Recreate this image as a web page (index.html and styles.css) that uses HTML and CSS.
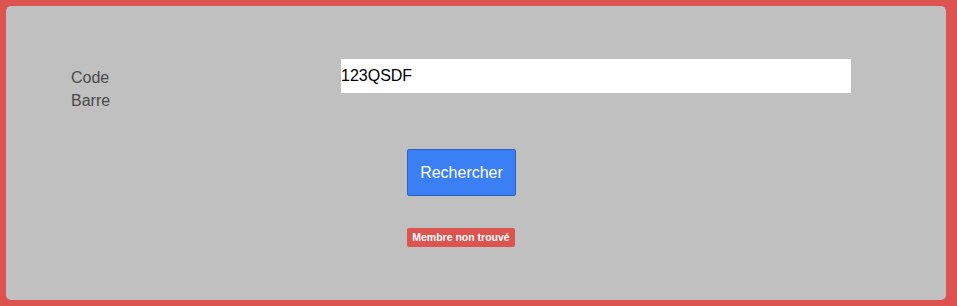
FILE: index.html
```html
<!DOCTYPE html>
<html lang="fr">
<head>
  <meta charset="UTF-8" />
  <title>Recherche membre</title>
  <link rel="stylesheet" href="styles.css">
</head>
<body>
  <div class="panel">
    <div class="row">
      <label class="label" for="code">Code Barre</label>
      <input type="text" id="code" class="field" value="123QSDF" autofocus>
    </div>
    <div class="actions search">
      <button class="btn">Rechercher</button>
    </div>
    <div class="actions result">
      <span class="badge">Membre non trouvé</span>
    </div>
  </div>
</body>
</html>
```

FILE: styles.css
```css
html, body {
  height: 100%;
}
body {
  margin: 0;
  background: #dd5350;
  font-family: "Liberation Sans", Arial, sans-serif;
  padding: 6px 11px 6px 6px;
  box-sizing: border-box;
}
.panel {
  background: #c0c0c0;
  border-radius: 5px;
  height: 100%;
  box-sizing: border-box;
  padding: 53px 0 0 65px;
}
.row {
  display: flex;
  align-items: flex-start;
}
.label {
  width: 60px;
  margin-right: 210px;
  padding-top: 7px;
  color: #4a4a4a;
  font-size: 16px;
  line-height: 23px;
}
.field {
  width: 510px;
  height: 34px;
  box-sizing: border-box;
  border: none;
  padding: 0;
  margin: 0;
  font-family: "Liberation Sans", Arial, sans-serif;
  font-size: 16px;
  color: #000;
  background: #fff;
  outline: none;
}
.actions {
  display: flex;
  padding-left: 336px;
}
.search {
  margin-top: 37px;
}
.result {
  margin-top: 32px;
}
.btn {
  width: 109px;
  height: 47px;
  background: #3a80f4;
  border: 1px solid #2a62c4;
  border-radius: 2px;
  color: #fff;
  font-family: "Liberation Sans", Arial, sans-serif;
  font-size: 16px;
  padding: 0;
}
.badge {
  width: 108px;
  height: 19px;
  line-height: 19px;
  text-align: center;
  background: #dd5350;
  color: #fff;
  font-size: 10.5px;
  font-weight: bold;
  border-radius: 2px;
}
```
